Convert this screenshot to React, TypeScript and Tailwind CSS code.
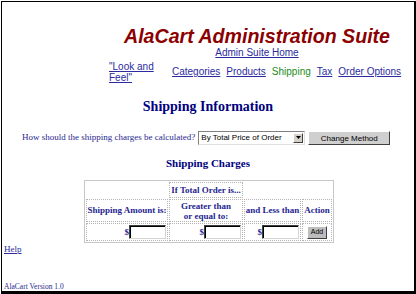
import React from 'react';

const serif = { fontFamily: '"Liberation Serif", "Times New Roman", serif' };
const arial = { fontFamily: '"Liberation Sans", Arial, sans-serif' };

const navLinks = ['Categories', 'Products', 'Shipping', 'Tax', 'Order Options'];

const cell = 'border border-dotted border-[#b4b4b4] p-0';

const MoneyInput = () => (
  <div className="flex items-center justify-end pr-px">
    <span className="text-[9px] leading-[10px] text-[#1f1f8f]">$</span>
    <div className="h-[14px] w-[37px] border border-t-[#404040] border-l-[#404040] border-r-[#d4d4d4] border-b-[#d4d4d4] bg-white shadow-[inset_1px_1px_0_#000]" />
  </div>
);

const App = () => {
  return (
    <div className="h-[294px] w-[416px] overflow-hidden bg-white pl-px pt-px">
      <div className="flex h-[293px] w-[415px] flex-col border-t border-l border-r-2 border-b-[3px] border-black" style={serif}>
        {/* header */}
        <div className="ml-[107px] mt-[23px] flex w-[296px] flex-col items-center" style={arial}>
          <h1 className="whitespace-nowrap text-[19.6px] font-bold italic leading-[22px] text-[#8b0000]">
            AlaCart Administration Suite
          </h1>
          <a className="text-[10px] leading-[12px] text-[#2b2b9e] underline">Admin Suite Home</a>
        </div>
        <div className="ml-[107px] mt-[2px] flex items-center text-[10px] text-[#2b2b9e]" style={arial}>
          <a className="w-[50px] leading-[11px] underline">"Look and Feel"</a>
          <div className="ml-[13px] flex gap-[6px] leading-[12px]">
            {navLinks.map((l) =>
              l === 'Shipping' ? (
                <span key={l} className="text-[#1a8c1a]">{l}</span>
              ) : (
                <a key={l} className="underline">{l}</a>
              ),
            )}
          </div>
        </div>

        {/* shipping info */}
        <h2 className="mt-[16px] text-center text-[14px] font-bold leading-[16px] text-[#000080]">
          Shipping Information
        </h2>
        <div className="ml-[20px] mt-[15px] flex h-[15px] items-center text-[9px] leading-[11px] text-[#1f1f8f]">
          <span className="whitespace-nowrap">How should the shipping charges be calculated?</span>
          <div className="ml-[3px] flex h-[14px] w-[107px] items-center border border-t-[#808080] border-l-[#808080] border-r-[#e0e0e0] border-b-[#e0e0e0] bg-white" style={arial}>
            <span className="flex-1 whitespace-nowrap pl-[2px] text-[8px] leading-[10px] text-black">By Total Price of Order</span>
            <span className="mr-px flex h-[10px] w-[10px] items-center justify-center border border-t-white border-l-white border-r-[#404040] border-b-[#404040] bg-[#d4d0c8]">
              <svg width="5" height="3" viewBox="0 0 5 3"><path d="M0 0h5L2.5 3z" fill="#000" /></svg>
            </span>
          </div>
          <button className="ml-[3px] mt-px h-[14px] w-[82px] border border-t-white border-l-white border-r-[#404040] border-b-[#404040] bg-[#cfcfcf] text-[8px] leading-[11px] text-black" style={arial}>
            Change Method
          </button>
        </div>

        <h3 className="mt-[12px] text-center text-[11px] font-bold leading-[13px] text-[#000080]">
          Shipping Charges
        </h3>

        <table className="ml-[82px] mt-[10px] w-[250px] table-fixed border-separate border-spacing-[1px] border border-[#c8c8c8] text-[9px] font-bold text-[#1f1f8f]">
          <colgroup>
            <col className="w-[82px]" />
            <col className="w-[74px]" />
            <col className="w-[57px]" />
            <col className="w-[30px]" />
          </colgroup>
          <tbody>
            <tr>
              <td className="h-[16px] p-0" />
              <td className={`${cell} h-[16px] whitespace-nowrap text-center leading-[11px]`}>If Total Order is...</td>
              <td className="p-0" />
              <td className="p-0" />
            </tr>
            <tr>
              <td className={`${cell} h-[23px] whitespace-nowrap text-center`}>Shipping Amount is:</td>
              <td className={`${cell} text-center leading-[10px]`}>Greater than<br />or equal to:</td>
              <td className={`${cell} whitespace-nowrap text-center`}>and Less than</td>
              <td className={`${cell} text-center`}>Action</td>
            </tr>
            <tr>
              <td className={`${cell} h-[18px]`}><MoneyInput /></td>
              <td className={cell}><MoneyInput /></td>
              <td className={cell}><MoneyInput /></td>
              <td className={`${cell} text-center`}>
                <button className="h-[13px] w-[20px] border border-t-white border-l-white border-r-[#404040] border-b-[#404040] bg-[#bdbdbd] text-[7px] font-normal leading-[10px] text-black" style={arial}>
                  Add
                </button>
              </td>
            </tr>
          </tbody>
        </table>

        <a className="ml-[2px] mt-px w-fit text-[9px] leading-[11px] text-[#2b2b9e] underline">Help</a>
        <div className="ml-[2px] mt-auto whitespace-nowrap text-[7.5px] leading-[8px] text-[#1f1f8f]">AlaCart Version 1.0</div>
      </div>
    </div>
  );
};

export default App;
